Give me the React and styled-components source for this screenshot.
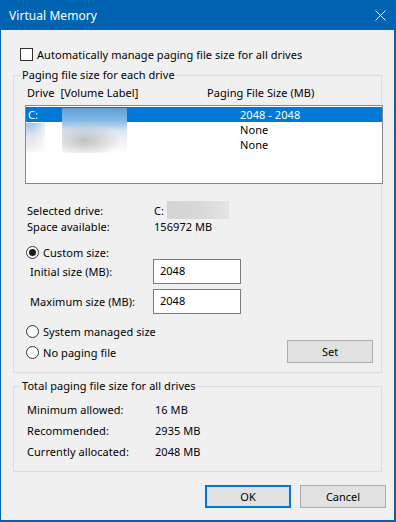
import React from "react";
import styled, { createGlobalStyle } from "styled-components";

const GlobalStyle = createGlobalStyle`
  html, body {
    margin: 0;
    padding: 0;
    background: #ffffff;
  }
  body {
    font-family: "Segoe UI", "Noto Sans", "Open Sans", sans-serif;
    font-size: 11px;
    letter-spacing: 0.06px;
    color: #000;
  }
`;

const Window = styled.div`
  width: 396px;
  height: 522px;
  box-sizing: border-box;
  background: #f0f0f0;
  border-left: 1px solid #0063b1;
  border-right: 2px solid #0063b1;
  border-bottom: 2px solid #0063b1;
  display: flex;
  flex-direction: column;
`;

const TitleBar = styled.div`
  height: 30px;
  flex: none;
  background: #0063b1;
  color: #fff;
  display: flex;
  align-items: center;
  padding-left: 8px;
  font-size: 12px;
`;

const Title = styled.div`
  flex: 1;
`;

const Close = styled.div`
  width: 11px;
  height: 11px;
  margin-right: 8px;
  display: flex;
`;

const Body = styled.div`
  flex: 1;
  display: flex;
  flex-direction: column;
  padding-left: 12px;
`;

const CheckRow = styled.label`
  display: flex;
  align-items: center;
  gap: 4px;
  height: 13px;
  margin: 18px 0 0 7px;
`;

const Box = styled.span`
  width: 13px;
  height: 13px;
  box-sizing: border-box;
  border: 1px solid #333;
  background: #fff;
`;

const Group = styled.fieldset`
  width: 369px;
  box-sizing: border-box;
  margin: ${(p) => p.$top}px 0 0 0;
  padding: 0 0 ${(p) => p.$bottom}px 0;
  border: 1px solid #dcdcdc;
  min-inline-size: 0;
`;

const Legend = styled.legend`
  margin-left: 7px;
  padding: 0 1px;
  line-height: 16px;
`;

const Header = styled.div`
  display: grid;
  grid-template-columns: 180px 1fr;
  padding-left: 13px;
  margin-top: 2px;
  line-height: 16px;
`;

const HeadCell = styled.span`
  display: flex;
  gap: 6px;
`;

const ListBox = styled.div`
  position: relative;
  width: 358px;
  height: 79px;
  box-sizing: border-box;
  margin: 4px 0 0 11px;
  padding: 1px 0;
  border: 1px solid #828790;
  background: #fff;
`;

const ListRow = styled.div`
  display: grid;
  grid-template-columns: 212px 1fr;
  height: 15px;
  line-height: 15px;
  padding-left: 2px;
  background: ${(p) => (p.$selected ? "#0078d7" : "transparent")};
  color: ${(p) => (p.$selected ? "#fff" : "#000")};
`;

const Smudge = styled.div`
  position: absolute;
  left: ${(p) => p.$x}px;
  top: ${(p) => p.$y}px;
  width: ${(p) => p.$w}px;
  height: ${(p) => p.$h}px;
  background: ${(p) => p.$bg};
`;

const Info = styled.div`
  display: grid;
  grid-template-columns: ${(p) => p.$col}px 1fr;
  grid-auto-rows: ${(p) => p.$lh}px;
  align-items: center;
  padding-left: 13px;
  margin-top: ${(p) => p.$top}px;
  line-height: ${(p) => p.$lh}px;
`;

const ValueCell = styled.span`
  display: flex;
  align-items: center;
  gap: 3px;
  height: 16px;
`;

const Blur = styled.span`
  width: 62px;
  height: 18px;
  flex: none;
  margin-top: -2px;
  background: linear-gradient(90deg, #d3d3d3, #d9d9d9 55%, #e4e4e4);
`;

const RadioRow = styled.label`
  display: flex;
  align-items: center;
  gap: 4px;
  height: 14px;
  margin: ${(p) => p.$top}px 0 0 12px;
`;

const Radio = styled.span`
  width: 13px;
  height: 13px;
  box-sizing: border-box;
  border: 1px solid #333;
  border-radius: 50%;
  background: #fff;
  display: flex;
  align-items: center;
  justify-content: center;
  &::after {
    content: "";
    width: 7px;
    height: 7px;
    border-radius: 50%;
    background: ${(p) => (p.$checked ? "#1a1a1a" : "transparent")};
  }
`;

const FieldRow = styled.div`
  display: grid;
  grid-template-columns: 123px 88px;
  align-items: center;
  padding-left: 16px;
  margin-top: ${(p) => p.$top}px;
`;

const TextBox = styled.input`
  width: 88px;
  height: 25px;
  box-sizing: border-box;
  border: 1px solid #7a7a7a;
  background: #fff;
  padding: 0 0 3px 6px;
  font: inherit;
  color: #000;
  outline: none;
`;

const BottomRow = styled.div`
  display: flex;
  align-items: flex-start;
  margin-top: 10px;
`;

const RadioCol = styled.div`
  flex: 1;
  display: flex;
  flex-direction: column;
`;

const Button = styled.button`
  width: 86px;
  height: 23px;
  box-sizing: border-box;
  background: #e1e1e1;
  border: ${(p) => (p.$default ? "2px solid #0078d7" : "1px solid #adadad")};
  font: inherit;
  color: #000;
  padding: 0;
  margin-top: ${(p) => p.$top || 0}px;
  margin-right: ${(p) => p.$right || 0}px;
`;

const Actions = styled.div`
  display: flex;
  justify-content: flex-end;
  gap: 9px;
  margin: 13px 8px 0 0;
`;

const rows = [
  { drive: "C:", size: "2048 - 2048", selected: true },
  { drive: "", size: "None" },
  { drive: "", size: "None" },
];

const totals = [
  ["Minimum allowed:", "16 MB"],
  ["Recommended:", "2935 MB"],
  ["Currently allocated:", "2048 MB"],
];

export default function App() {
  return (
    <>
      <GlobalStyle />
      <Window>
        <TitleBar>
          <Title>Virtual Memory</Title>
          <Close>
            <svg width="11" height="11" viewBox="0 0 11 11">
              <path d="M0.5 0.5 L10.5 10.5 M10.5 0.5 L0.5 10.5" stroke="#fff" strokeWidth="1" />
            </svg>
          </Close>
        </TitleBar>
        <Body>
          <CheckRow>
            <Box />
            Automatically manage paging file size for all drives
          </CheckRow>

          <Group $top={6} $bottom={9}>
            <Legend>Paging file size for each drive</Legend>
            <Header>
              <HeadCell>
                <span>Drive</span>
                <span>[Volume Label]</span>
              </HeadCell>
              <span>Paging File Size (MB)</span>
            </Header>
            <ListBox>
              {rows.map((r, i) => (
                <ListRow key={i} $selected={r.selected}>
                  <span>{r.drive}</span>
                  <span>{r.size}</span>
                </ListRow>
              ))}
              <Smudge
                $x={36}
                $y={2}
                $w={65}
                $h={45}
                $bg="radial-gradient(ellipse 55% 40% at 35% 72%, rgba(185,185,185,0.85), rgba(255,255,255,0) 100%), linear-gradient(180deg, #5d9fd9 0%, #86b9e5 28%, #dde8f3 52%, #f4f4f4 80%, #ffffff 100%)"
              />
              <Smudge
                $x={0}
                $y={17}
                $w={19}
                $h={29}
                $bg="linear-gradient(90deg, rgba(255,255,255,0) 40%, rgba(255,255,255,0.7) 100%), linear-gradient(180deg, #a3c6e8 0%, #dfe5ec 45%, #ececec 75%, #f6f6f6 100%)"
              />
            </ListBox>

            <Info $col={127} $top={19} $lh={16}>
              <span>Selected drive:</span>
              <ValueCell>
                C: <Blur />
              </ValueCell>
              <span>Space available:</span>
              <span>156972 MB</span>
            </Info>

            <RadioRow $top={10}>
              <Radio $checked />
              Custom size:
            </RadioRow>
            <FieldRow $top={0}>
              <span>Initial size (MB):</span>
              <TextBox defaultValue="2048" />
            </FieldRow>
            <FieldRow $top={5}>
              <span>Maximum size (MB):</span>
              <TextBox defaultValue="2048" />
            </FieldRow>

            <BottomRow>
              <RadioCol>
                <RadioRow $top={0}>
                  <Radio />
                  System managed size
                </RadioRow>
                <RadioRow $top={7}>
                  <Radio />
                  No paging file
                </RadioRow>
              </RadioCol>
              <Button $top={16} $right={8}>
                Set
              </Button>
            </BottomRow>
          </Group>

          <Group $top={5} $bottom={9}>
            <Legend>Total paging file size for all drives</Legend>
            <Info $col={128} $top={5} $lh={21}>
              {totals.map(([k, v]) => (
                <React.Fragment key={k}>
                  <span>{k}</span>
                  <span>{v}</span>
                </React.Fragment>
              ))}
            </Info>
          </Group>

          <Actions>
            <Button $default>OK</Button>
            <Button>Cancel</Button>
          </Actions>
        </Body>
      </Window>
    </>
  );
}
